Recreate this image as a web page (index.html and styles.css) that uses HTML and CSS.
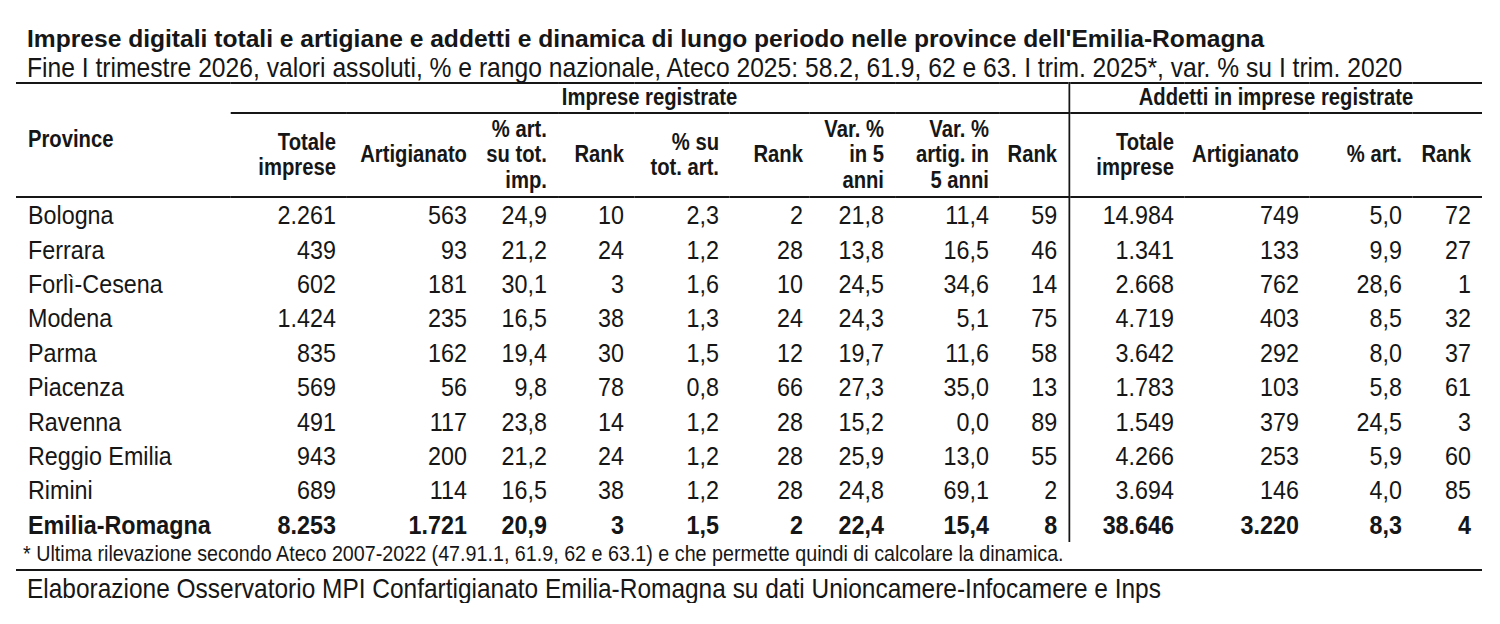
FILE: index.html
```html
<!DOCTYPE html>
<html lang="it">
<head>
<meta charset="utf-8">
<title>Imprese digitali Emilia-Romagna</title>
<link rel="stylesheet" href="styles.css">
</head>
<body>
<div class="page">
  <h1 class="title">Imprese digitali totali e artigiane e addetti e dinamica di lungo periodo nelle province dell'Emilia-Romagna</h1>
  <div class="frame">
    <div class="narrow">
      <p class="subtitle">Fine I trimestre 2026, valori assoluti, % e rango nazionale, Ateco 2025: 58.2, 61.9, 62 e 63. I trim. 2025*, var. % su I trim. 2020</p>
      <table class="data">
        <colgroup>
          <col class="c-prov"><col class="c-tot"><col class="c-art"><col class="c-pct"><col class="c-rank1">
          <col class="c-su"><col class="c-rank2"><col class="c-var"><col class="c-varart"><col class="c-rank3">
          <col class="c-tot2"><col class="c-art2"><col class="c-pct2"><col class="c-rank4">
        </colgroup>
        <thead>
          <tr class="group-row">
            <th rowspan="2" class="prov-h">Province</th>
            <th colspan="9" class="group">Imprese registrate</th>
            <th colspan="4" class="group div">Addetti in imprese registrate</th>
          </tr>
          <tr class="head-row">
            <th>Totale<br>imprese</th>
            <th>Artigianato</th>
            <th>% art.<br>su tot.<br>imp.</th>
            <th>Rank</th>
            <th>% su<br>tot. art.</th>
            <th>Rank</th>
            <th>Var. %<br>in 5<br>anni</th>
            <th>Var. %<br>artig. in<br>5 anni</th>
            <th>Rank</th>
            <th class="div">Totale<br>imprese</th>
            <th>Artigianato</th>
            <th>% art.</th>
            <th>Rank</th>
          </tr>
        </thead>
        <tbody>
          <tr><td>Bologna</td><td>2.261</td><td>563</td><td>24,9</td><td>10</td><td>2,3</td><td>2</td><td>21,8</td><td>11,4</td><td>59</td><td class="div">14.984</td><td>749</td><td>5,0</td><td>72</td></tr>
          <tr><td>Ferrara</td><td>439</td><td>93</td><td>21,2</td><td>24</td><td>1,2</td><td>28</td><td>13,8</td><td>16,5</td><td>46</td><td class="div">1.341</td><td>133</td><td>9,9</td><td>27</td></tr>
          <tr><td>Forlì-Cesena</td><td>602</td><td>181</td><td>30,1</td><td>3</td><td>1,6</td><td>10</td><td>24,5</td><td>34,6</td><td>14</td><td class="div">2.668</td><td>762</td><td>28,6</td><td>1</td></tr>
          <tr><td>Modena</td><td>1.424</td><td>235</td><td>16,5</td><td>38</td><td>1,3</td><td>24</td><td>24,3</td><td>5,1</td><td>75</td><td class="div">4.719</td><td>403</td><td>8,5</td><td>32</td></tr>
          <tr><td>Parma</td><td>835</td><td>162</td><td>19,4</td><td>30</td><td>1,5</td><td>12</td><td>19,7</td><td>11,6</td><td>58</td><td class="div">3.642</td><td>292</td><td>8,0</td><td>37</td></tr>
          <tr><td>Piacenza</td><td>569</td><td>56</td><td>9,8</td><td>78</td><td>0,8</td><td>66</td><td>27,3</td><td>35,0</td><td>13</td><td class="div">1.783</td><td>103</td><td>5,8</td><td>61</td></tr>
          <tr><td>Ravenna</td><td>491</td><td>117</td><td>23,8</td><td>14</td><td>1,2</td><td>28</td><td>15,2</td><td>0,0</td><td>89</td><td class="div">1.549</td><td>379</td><td>24,5</td><td>3</td></tr>
          <tr><td>Reggio Emilia</td><td>943</td><td>200</td><td>21,2</td><td>24</td><td>1,2</td><td>28</td><td>25,9</td><td>13,0</td><td>55</td><td class="div">4.266</td><td>253</td><td>5,9</td><td>60</td></tr>
          <tr><td>Rimini</td><td>689</td><td>114</td><td>16,5</td><td>38</td><td>1,2</td><td>28</td><td>24,8</td><td>69,1</td><td>2</td><td class="div">3.694</td><td>146</td><td>4,0</td><td>85</td></tr>
          <tr class="total"><td>Emilia-Romagna</td><td>8.253</td><td>1.721</td><td>20,9</td><td>3</td><td>1,5</td><td>2</td><td>22,4</td><td>15,4</td><td>8</td><td class="div">38.646</td><td>3.220</td><td>8,3</td><td>4</td></tr>
        </tbody>
      </table>
      <p class="note">* Ultima rilevazione secondo Ateco 2007-2022 (47.91.1, 61.9, 62 e 63.1) e che permette quindi di calcolare la dinamica.</p>
      <p class="source">Elaborazione Osservatorio MPI Confartigianato Emilia-Romagna su dati Unioncamere-Infocamere e Inps</p>
    </div>
  </div>
</div>
</body>
</html>
```

FILE: styles.css
```css
html, body {
  margin: 0;
  padding: 0;
  background: #ffffff;
}

body {
  font-family: "Liberation Sans", Arial, sans-serif;
  color: #161616;
}

.page {
  width: 1466px;
  padding: 24px 0 0 16px;
}

.title {
  margin: 0;
  padding-left: 11px;
  font-size: 24.6px;
  line-height: 29px;
  font-weight: bold;
}

/* Arial Narrow look: everything below the title is laid out wide and
   compressed horizontally to 88% */
.frame {
  width: 1466px;
  overflow: hidden;
}

.narrow {
  width: 1665.9px;
  transform: scaleX(0.88);
  transform-origin: 0 0;
}

.subtitle {
  margin: 0;
  padding-left: 12.5px;
  font-size: 28px;
  line-height: 29px;
  font-weight: normal;
  white-space: nowrap;
}

.data {
  width: 1665.9px;
  border-collapse: collapse;
  table-layout: fixed;
  border-top: 2px solid #161616;
}

.c-prov { width: 244.3px; }
.c-tot { width: 131.8px; }
.c-art { width: 148.9px; }
.c-pct { width: 90.9px; }
.c-rank1 { width: 87.5px; }
.c-su { width: 108px; }
.c-rank2 { width: 90.9px; }
.c-var { width: 96.6px; }
.c-varart { width: 119.3px; }
.c-rank3 { width: 78.4px; }
.c-tot2 { width: 131.8px; }
.c-art2 { width: 142px; }
.c-pct2 { width: 117px; }
.c-rank4 { width: 78.4px; }

.data th {
  font-size: 23px;
  line-height: 25.5px;
  font-weight: bold;
  text-align: right;
  vertical-align: middle;
  padding: 0 12.5px 0 0;
  white-space: nowrap;
}

.group-row th.group {
  height: 28px;
  text-align: center;
  border-bottom: 2px solid #161616;
  padding: 0;
}

.data th.prov-h {
  text-align: left;
  padding-left: 13.6px;
  border-bottom: 2px solid #161616;
}

.head-row th {
  height: 82px;
  border-bottom: 2px solid #161616;
}

.data td {
  font-size: 26.5px;
  height: 34.4px;
  line-height: 30px;
  text-align: right;
  padding: 0 12.5px 0 0;
  white-space: nowrap;
}

.data td:first-child {
  text-align: left;
  padding-left: 13.6px;
}

.data td:nth-child(7),
.head-row th:nth-child(6) {
  padding-right: 8px;
}

.data .div {
  border-left: 2.3px solid #161616;
}

.total td {
  font-weight: bold;
}

.note {
  margin: 0;
  padding: 0 0 3px 8px;
  font-size: 22.4px;
  line-height: 24px;
  white-space: nowrap;
  border-bottom: 2px solid #161616;
}

.source {
  margin: 0;
  padding: 4px 0 0 12.5px;
  font-size: 27.8px;
  line-height: 28px;
  white-space: nowrap;
}
```
